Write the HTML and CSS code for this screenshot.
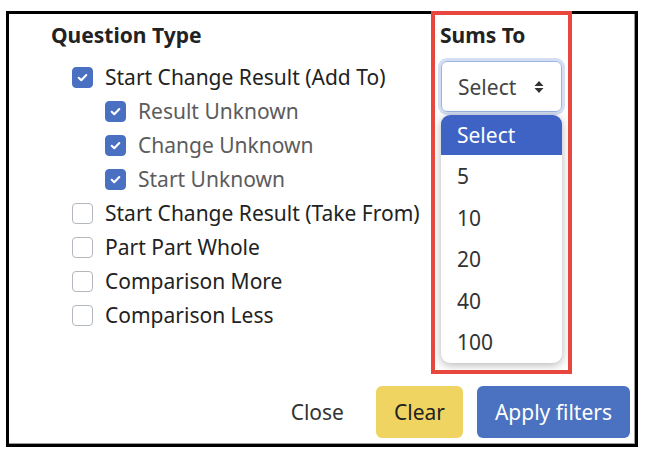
FILE: index.html
```html
<!DOCTYPE html>
<html lang="en">
<head>
    <meta charset="UTF-8">
    <title>Filters</title>
    <link rel="stylesheet" href="styles.css">
</head>
<body>
    <div class="frame">
        <div class="modal-body">
            <div class="col-type">
                <h5 class="col-title">Question Type</h5>
                <ul class="check-list">
                    <li class="check-row">
                        <span class="box checked"><svg viewBox="0 0 20 20"><path d="M6 10.3l2.7 2.6L14 7.4"/></svg></span>
                        <span>Start Change Result (Add To)</span>
                    </li>
                    <li class="check-row sub">
                        <span class="box checked"><svg viewBox="0 0 20 20"><path d="M6 10.3l2.7 2.6L14 7.4"/></svg></span>
                        <span>Result Unknown</span>
                    </li>
                    <li class="check-row sub">
                        <span class="box checked"><svg viewBox="0 0 20 20"><path d="M6 10.3l2.7 2.6L14 7.4"/></svg></span>
                        <span>Change Unknown</span>
                    </li>
                    <li class="check-row sub">
                        <span class="box checked"><svg viewBox="0 0 20 20"><path d="M6 10.3l2.7 2.6L14 7.4"/></svg></span>
                        <span>Start Unknown</span>
                    </li>
                    <li class="check-row">
                        <span class="box"></span>
                        <span>Start Change Result (Take From)</span>
                    </li>
                    <li class="check-row">
                        <span class="box"></span>
                        <span>Part Part Whole</span>
                    </li>
                    <li class="check-row">
                        <span class="box"></span>
                        <span>Comparison More</span>
                    </li>
                    <li class="check-row">
                        <span class="box"></span>
                        <span>Comparison Less</span>
                    </li>
                </ul>
            </div>
            <div class="col-sums">
                <h5 class="col-title">Sums To</h5>
                <div class="select">
                    <span>Select</span>
                    <svg class="caret" viewBox="0 0 12 16"><path d="M6 2l4.5 5h-9z M6 14l4.5-5h-9z"/></svg>
                </div>
                <ul class="options">
                    <li class="active">Select</li>
                    <li>5</li>
                    <li>10</li>
                    <li>20</li>
                    <li>40</li>
                    <li>100</li>
                </ul>
            </div>
        </div>
        <div class="modal-footer">
            <button class="btn btn-link">Close</button>
            <button class="btn btn-warning">Clear</button>
            <button class="btn btn-primary">Apply filters</button>
        </div>
        <div class="highlight"></div>
    </div>
</body>
</html>
```

FILE: styles.css
```css
body {
    margin: 0;
    background: #fff;
    font-family: 'Noto Sans', 'Open Sans', sans-serif;
    color: #222;
}

.frame {
    position: relative;
    box-sizing: border-box;
    width: 632px;
    height: 436px;
    margin: 11px 0 0 6px;
    border: 3px solid #000;
    box-shadow: inset -1px -1px 0 #9a9a9a;
    display: flex;
    flex-direction: column;
}

.modal-body {
    flex: 1;
    display: grid;
    grid-template-columns: 389px 1fr;
    padding: 9px 0 0 42px;
}

.col-title {
    margin: 0;
    font-size: 21px;
    line-height: 24px;
    font-weight: 700;
    color: #222;
}

.check-list {
    list-style: none;
    margin: 13px 0 0;
    padding: 0 0 0 21px;
}

.check-row {
    display: flex;
    align-items: center;
    gap: 12px;
    height: 34px;
    font-size: 21px;
    color: #222;
}

.check-row.sub {
    padding-left: 33px;
    color: #5c5c5c;
}

.box {
    box-sizing: border-box;
    width: 21px;
    height: 21px;
    border: 1px solid #b3b8be;
    border-radius: 4px;
    background: #fff;
    flex-shrink: 0;
}

.box.checked {
    background: #4a70c2;
    border-color: #4a70c2;
}

.box svg {
    display: block;
    width: 19px;
    height: 19px;
    fill: none;
    stroke: #fff;
    stroke-width: 2.2;
    stroke-linecap: round;
    stroke-linejoin: round;
}

.col-sums {
    position: relative;
}

.select {
    box-sizing: border-box;
    width: 121px;
    height: 51px;
    margin: 14px 0 0 1px;
    display: flex;
    align-items: center;
    justify-content: space-between;
    padding: 0 16px 0 16px;
    border: 1px solid #9db4e2;
    border-radius: 6px;
    box-shadow: 0 0 0 3px #d3def2;
    font-size: 21px;
    color: #444;
}

.caret {
    width: 12px;
    height: 16px;
    fill: #333;
}

.options {
    position: absolute;
    left: 1px;
    top: 92px;
    width: 121px;
    margin: 0;
    padding: 0;
    list-style: none;
    background: #fff;
    border-radius: 9px;
    overflow: hidden;
    box-shadow: 0 2px 10px rgba(0, 0, 0, 0.3);
}

.options li {
    height: 41.5px;
    line-height: 42px;
    padding-left: 16px;
    font-size: 21px;
    color: #333;
}

.options li.active {
    height: 40px;
    line-height: 40px;
    background: #3f63c5;
    color: #fff;
}

.modal-footer {
    display: flex;
    justify-content: flex-end;
    gap: 14px;
    padding: 0 5px 6px 0;
}

.btn {
    height: 52px;
    padding: 0 18px;
    border: none;
    border-radius: 6px;
    font-family: inherit;
    font-size: 21px;
    cursor: pointer;
}

.btn-link {
    background: transparent;
    color: #333;
}

.btn-warning {
    background: #f0d462;
    color: #222;
}

.btn-primary {
    background: #4b72c0;
    color: #fff;
}

.highlight {
    position: absolute;
    left: 422px;
    top: -3px;
    width: 141px;
    height: 363px;
    box-sizing: border-box;
    border: 4px solid #e8473e;
    pointer-events: none;
}
```
